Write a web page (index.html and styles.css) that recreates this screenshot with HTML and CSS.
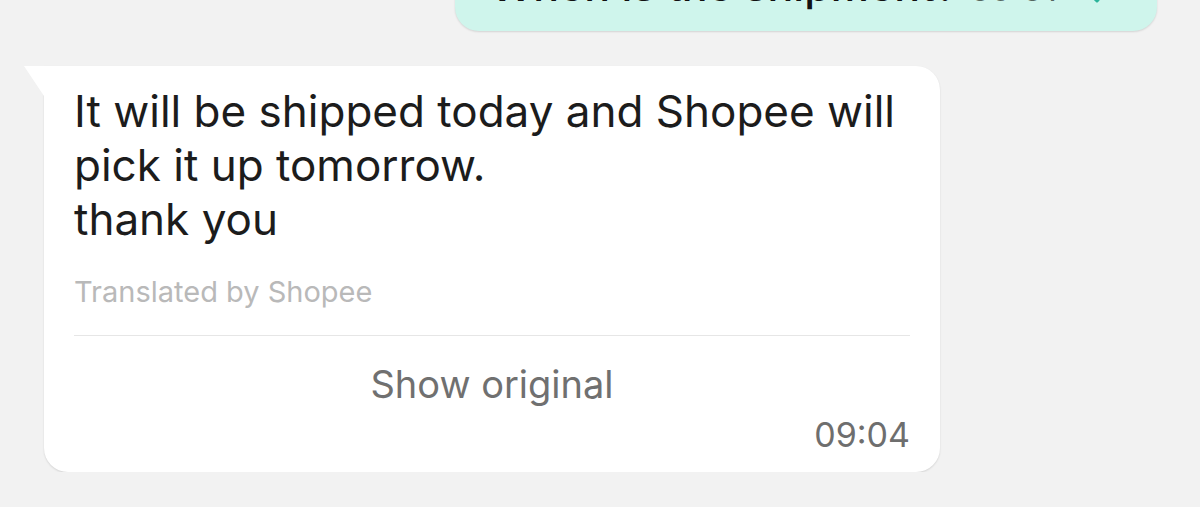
FILE: index.html
```html
<!DOCTYPE html>
<html lang="en">
    <head>
        <meta charset="UTF-8" />
        <meta name="viewport" content="width=device-width, initial-scale=1.0" />
        <title>Chat</title>
        <link rel="stylesheet" href="styles.css">
    </head>
    <body>
        <div class="chat">
            <div class="row row-out">
                <div class="bubble bubble-out">
                    <span class="msg-text">When is the shipment?</span>
                    <span class="meta">
                        <span class="time-out">09:01</span>
                        <svg class="check" width="26" height="20" viewBox="0 0 26 20">
                            <path d="M3 11 L10 18 L23 3" fill="none" stroke="#2bb39a" stroke-width="3" stroke-linecap="round" stroke-linejoin="round" />
                        </svg>
                    </span>
                </div>
            </div>

            <div class="row row-in">
                <div class="bubble bubble-in">
                    <p class="msg-text">It will be shipped today and Shopee will pick it up tomorrow.<br />thank you</p>
                    <div class="translated">Translated by Shopee</div>
                    <div class="divider"></div>
                    <div class="show-original">Show original</div>
                    <div class="time-in">09:04</div>
                </div>
            </div>
        </div>
    </body>
</html>
```

FILE: styles.css
```css
html, body {
    margin: 0;
    padding: 0;
    background-color: #f2f2f2;
    font-family: "Inter", "Noto Sans", sans-serif;
    color: #1c1c1c;
}

.chat {
    display: flex;
    flex-direction: column;
    gap: 35px;
}

.row {
    display: flex;
}

.row-out {
    justify-content: flex-end;
    padding-right: 43px;
}

.row-in {
    padding-left: 44px;
}

.bubble {
    position: relative;
    border-radius: 24px;
    box-shadow: 0 1px 2px rgba(0, 0, 0, 0.13);
}

/* sent message, cut off by the top edge */
.bubble-out {
    background-color: #cff5ec;
    width: 702px;
    box-sizing: border-box;
    margin-top: -62px;
    padding: 20px 44px 19px 35px;
    display: flex;
    align-items: baseline;
    justify-content: space-between;
}

.bubble-out .msg-text {
    font-size: 43px;
    line-height: 54px;
    font-weight: 500;
    color: #111;
}

.meta {
    display: flex;
    align-items: baseline;
    gap: 30px;
}

.time-out {
    font-size: 34px;
    color: #55665f;
}

.check {
    position: relative;
    top: 2px;
}

/* received message */
.bubble-in {
    background-color: #fff;
    width: 896px;
    box-sizing: border-box;
    padding: 18px 30px 17px 30px;
    border-top-left-radius: 0;
}

.bubble-in::before {
    content: "";
    position: absolute;
    left: -20px;
    top: 0;
    width: 20px;
    height: 30px;
    background-color: #fff;
    clip-path: polygon(0 0, 100% 0, 100% 100%);
}

.bubble-in .msg-text {
    margin: 0;
    font-size: 44px;
    line-height: 54px;
}

.translated {
    margin-top: 29px;
    font-size: 29px;
    line-height: 34px;
    color: #b9b9b9;
}

.divider {
    margin-top: 26px;
    height: 1px;
    background-color: #e6e6e6;
}

.show-original {
    margin-top: 26px;
    font-size: 38px;
    line-height: 44px;
    text-align: center;
    color: #707070;
}

.time-in {
    margin-top: 9px;
    font-size: 34px;
    line-height: 40px;
    text-align: right;
    color: #6e6e6e;
}
```
